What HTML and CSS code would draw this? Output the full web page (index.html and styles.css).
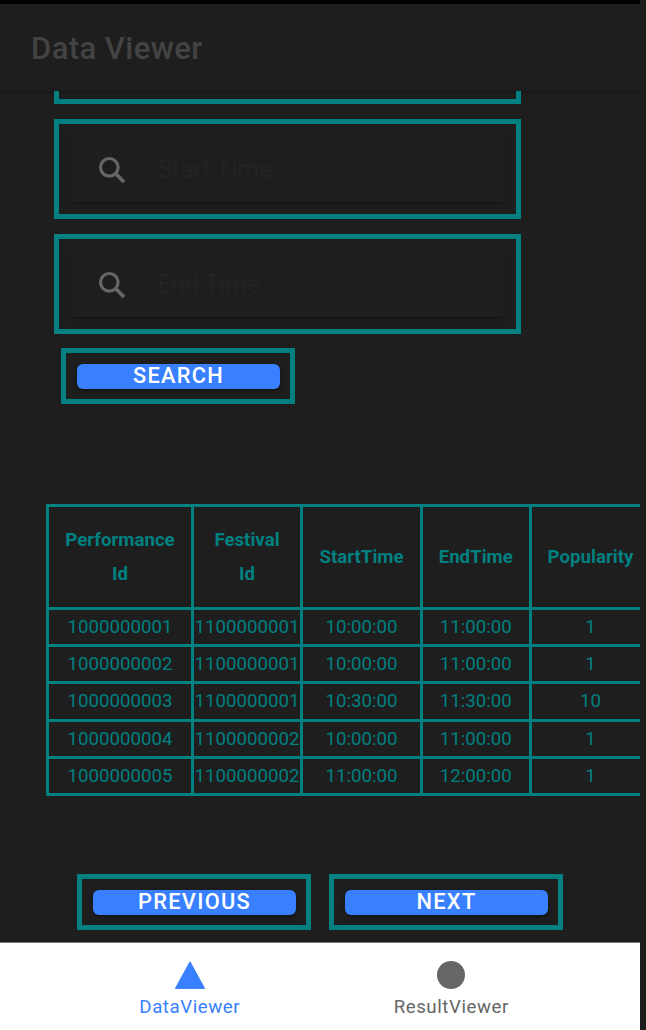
FILE: index.html
```html
<!DOCTYPE html>
<html lang="en">
<head>
<meta charset="utf-8">
<title>Data Viewer</title>
<link rel="stylesheet" href="styles.css">
</head>
<body>
<div class="app">
  <header class="toolbar"><h1 class="title">Data Viewer</h1></header>
  <main class="content">
    <div class="field field-cut"></div>
    <div class="field">
      <div class="searchbar">
        <svg class="search-icon" viewBox="0 0 28 28"><circle cx="11.3" cy="11.3" r="8.8"/><path d="M17.2 17.2l8.8 8.8" stroke-width="3.8"/></svg>
        <span class="placeholder">Start Time</span>
      </div>
    </div>
    <div class="field">
      <div class="searchbar">
        <svg class="search-icon" viewBox="0 0 28 28"><circle cx="11.3" cy="11.3" r="8.8"/><path d="M17.2 17.2l8.8 8.8" stroke-width="3.8"/></svg>
        <span class="placeholder">End Time</span>
      </div>
    </div>
    <div class="action action-search"><button class="button">SEARCH</button></div>
    <div class="table">
      <div class="cell head">Performance<br>Id</div><div class="cell head">Festival<br>Id</div><div class="cell head">StartTime</div><div class="cell head">EndTime</div><div class="cell head">Popularity</div>
      <div class="cell">1000000001</div><div class="cell">1100000001</div><div class="cell">10:00:00</div><div class="cell">11:00:00</div><div class="cell">1</div>
      <div class="cell">1000000002</div><div class="cell">1100000001</div><div class="cell">10:00:00</div><div class="cell">11:00:00</div><div class="cell">1</div>
      <div class="cell">1000000003</div><div class="cell">1100000001</div><div class="cell">10:30:00</div><div class="cell">11:30:00</div><div class="cell">10</div>
      <div class="cell">1000000004</div><div class="cell">1100000002</div><div class="cell">10:00:00</div><div class="cell">11:00:00</div><div class="cell">1</div>
      <div class="cell">1000000005</div><div class="cell">1100000002</div><div class="cell">11:00:00</div><div class="cell">12:00:00</div><div class="cell">1</div>
    </div>
    <div class="pager">
      <div class="action"><button class="button">PREVIOUS</button></div>
      <div class="action"><button class="button">NEXT</button></div>
    </div>
  </main>
  <nav class="tabs">
    <div class="tab active">
      <svg class="tab-icon" viewBox="0 0 32 30"><path d="M16 1.8L30.6 28.4H1.4Z" fill="currentColor" stroke="currentColor" stroke-width="1" stroke-linejoin="round"/></svg>
      <span>DataViewer</span>
    </div>
    <div class="tab">
      <svg class="tab-icon" viewBox="0 0 32 30"><circle cx="16" cy="15" r="14" fill="currentColor"/></svg>
      <span>ResultViewer</span>
    </div>
  </nav>
</div>
</body>
</html>
```
FILE: styles.css
```css
* { box-sizing: border-box; }
body {
  margin: 0;
  background: #1e1e1e;
  font-family: Roboto, "Liberation Sans", sans-serif;
}
.app {
  width: 640px;
  height: 1030px;
  border-top: 4px solid #000;
  display: flex;
  flex-direction: column;
  overflow: hidden;
}
.toolbar {
  flex: none;
  height: 87px;
  padding-left: 31px;
  display: flex;
  align-items: center;
  background: #1e1e1e;
  box-shadow: 0 1px 4px rgba(0, 0, 0, .35);
}
.title {
  margin: 0;
  padding-top: 2px;
  font-size: 31.1px;
  font-weight: 500;
  letter-spacing: .39px;
  color: #434343;
}
.content {
  flex: 1;
  min-height: 0;
  overflow: hidden;
}
.field {
  width: 467px;
  height: 100px;
  margin: 0 0 15px 54px;
  padding: 12px 11px;
  border: 5px solid #008080;
}
.field-cut {
  height: 13px;
  padding: 0;
  border-top: 0;
}
.searchbar {
  height: 66px;
  padding-left: 28px;
  display: flex;
  align-items: center;
  border-radius: 3px;
  box-shadow: 0 3px 3px -2px rgba(0, 0, 0, .3), 0 2px 6px rgba(0, 0, 0, .15);
}
.search-icon {
  width: 28px;
  height: 28px;
  margin-top: 2px;
  fill: none;
  stroke: #666;
  stroke-width: 3.2;
}
.placeholder {
  margin-left: 31px;
  font-size: 24.9px;
  color: #232323;
}
.action {
  width: 234px;
  height: 56px;
  padding: 11px 10px 0 11px;
  border: 5px solid #008080;
}
.action-search {
  margin: -1px 0 0 61px;
}
.button {
  display: block;
  width: 203px;
  height: 25px;
  padding: 0;
  border: 0;
  border-radius: 6px;
  background: #3880ff;
  color: #fff;
  text-align: center;
  font: 500 21.8px/23px Roboto, "Liberation Sans", sans-serif;
  letter-spacing: 1.31px;
  padding-bottom: 2px;
  box-shadow: 0 3px 3px -2px rgba(0, 0, 0, .3), 0 2px 5px rgba(0, 0, 0, .25);
}
.table {
  display: grid;
  width: 650px;
  margin: 100px 0 0 46px;
  padding: 3px;
  gap: 3px;
  grid-template-columns: 142px 106px 117px 105.5px 118px;
  grid-template-rows: 99.5px repeat(5, 34.4px);
  background: #008080;
}
.cell {
  display: flex;
  align-items: center;
  justify-content: center;
  background: #1e1e1e;
  color: #008080;
  font-size: 18.67px;
  line-height: 34.2px;
}
.head {
  font-weight: 700;
  text-align: center;
}
.pager {
  display: flex;
  gap: 18px;
  margin: 78px 0 0 77px;
}
.tabs {
  flex: none;
  height: 88px;
  border-top: 1px solid #777;
  padding: 17px 58px 0 59px;
  display: flex;
  background: #fff;
}
.tab {
  flex: 1;
  display: flex;
  flex-direction: column;
  align-items: center;
  color: #666;
  font-size: 18.67px;
  line-height: 22px;
  letter-spacing: .56px;
}
.tab-icon {
  width: 32px;
  height: 30px;
  margin-bottom: 6px;
}
.active { color: #3880ff; }
```
